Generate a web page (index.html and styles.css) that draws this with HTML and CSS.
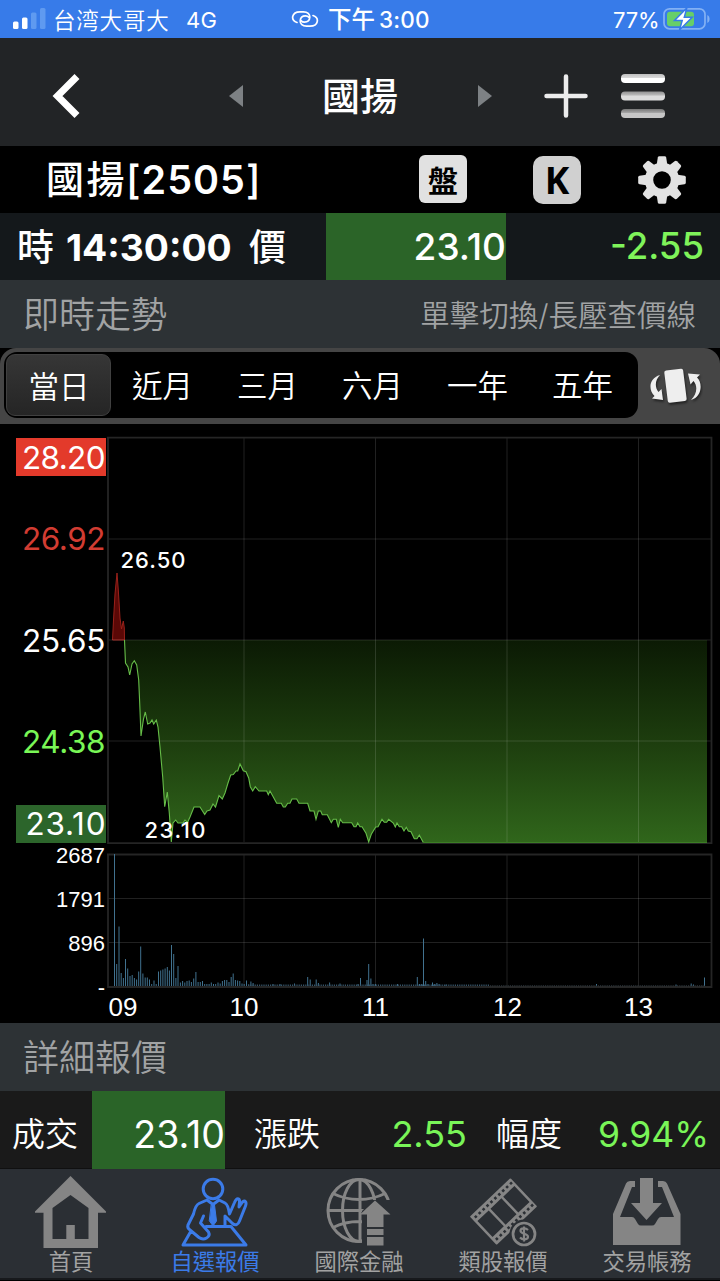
FILE: index.html
```html
<!DOCTYPE html>
<html lang="zh-Hant">
<head>
<meta charset="utf-8">
<title>國揚[2505]</title>
<link rel="stylesheet" href="styles.css">
</head>
<body>
<div class="screen">
  <header class="status">
    <svg class="signal" width="34" height="22" viewBox="0 0 34 22"><rect x="1" y="13.500" width="5.500" height="7.500" rx="1.500" fill="#fff"/><rect x="10" y="9.500" width="5.500" height="11.500" rx="1.500" fill="#fff"/><rect x="19" y="4.500" width="5.500" height="16.500" rx="1.500" fill="#5f9af0"/><rect x="28" y="0" width="5.500" height="21" rx="1.500" fill="#5f9af0"/></svg>
    <span class="carrier">台湾大哥大</span>
    <span class="network">4G</span>
    <svg class="link" width="28" height="18" viewBox="0 0 28 18" fill="none" stroke="#fff" stroke-width="1.700" stroke-linecap="round"><path d="M6 12.500C3 11.500 1.200 9 1.800 6.300 2.500 3.200 5.500 1.800 9 1.800h3.500c4 0 6.500 2.200 6.300 5.500-.2 3-2.300 4.900-5.300 4.900-1.500 0-2.700-.5-3.300-1.500"/><path d="M22 5.500c3 1 4.800 3.500 4.200 6.200-.7 3.100-3.700 4.500-7.200 4.500h-3.500c-4 0-6.500-2.200-6.300-5.500.2-3 2.300-4.900 5.300-4.900 1.500 0 2.700.5 3.300 1.500"/></svg>
    <span class="ampm">下午</span><span class="clock">3:00</span>
    <span class="percent">77%</span>
    <svg class="battery" width="48" height="24" viewBox="0 0 48 24"><rect x="1" y="1.800" width="41" height="20" rx="5.500" fill="none" stroke="#83b1f4" stroke-width="1.700"/><rect x="4" y="4.700" width="27" height="14.500" rx="3" fill="#67cf68"/><path d="M44.300 8v8c3-1.300 3-6.700 0-8z" fill="#83b1f4"/><path d="M23.800 1 11.500 13.500h7.700l-2.700 9.500L29.200 10.200h-7.900z" fill="#fff" stroke="#377be9" stroke-width="1.500"/></svg>
  </header>

  <nav class="topnav">
    <svg class="back" width="30" height="46" viewBox="0 0 30 46"><path d="M25 3.500 5.500 23 25 42.500" fill="none" stroke="#fff" stroke-width="7"/></svg>
    <svg class="prev" width="14" height="22" viewBox="0 0 14 22"><path d="M14 0v22L0 11z" fill="#7d8184"/></svg>
    <h1 class="nav-title">國揚</h1>
    <svg class="next" width="14" height="22" viewBox="0 0 14 22"><path d="M0 0v22l14-11z" fill="#7d8184"/></svg>
    <svg class="add" width="44" height="44" viewBox="0 0 44 44"><path d="M22 2.500v39M2.500 22h39" stroke="#ececec" stroke-width="4.500" stroke-linecap="round"/></svg>
    <svg class="menu" width="46" height="46" viewBox="0 0 46 46"><defs><linearGradient id="barA" x2="0" y2="1"><stop stop-color="#bfbfbf"/><stop offset=".45" stop-color="#dcdcdc"/><stop offset=".5" stop-color="#fff"/></linearGradient><linearGradient id="barB" x2="0" y2="1"><stop stop-color="#929292"/><stop offset=".4" stop-color="#bababa"/><stop offset=".5" stop-color="#dcdcdc"/></linearGradient><linearGradient id="barC" x2="0" y2="1"><stop stop-color="#777"/><stop offset=".45" stop-color="#aaa"/><stop offset=".5" stop-color="#c6c6c6"/></linearGradient></defs><rect x="1" y="1" width="44" height="9" rx="4" fill="url(#barA)"/><rect x="1" y="18.500" width="44" height="9" rx="4" fill="url(#barB)"/><rect x="1" y="36" width="44" height="9" rx="4" fill="url(#barC)"/></svg>
  </nav>

  <section class="symbol">
    <h2 class="symbol-name"><span class="symbol-cjk">國揚</span><span class="symbol-code"><span class="bracket">[</span>2505<span class="bracket">]</span></span></h2>
    <span class="chip chip-book">盤</span>
    <span class="chip chip-k">K</span>
    <svg class="gear" width="48" height="48" viewBox="-24 -24 48 48" fill="#e2e2e2"><defs><path id="tooth" d="M-5.500-14-4.200-22.500Q-3.900-23.800-2.700-23.800h5.400Q3.900-23.800 4.200-22.500L5.500-14z"/></defs><circle r="13" fill="none" stroke="#e2e2e2" stroke-width="8.400"/><use href="#tooth"/><use href="#tooth" transform="rotate(45)"/><use href="#tooth" transform="rotate(90)"/><use href="#tooth" transform="rotate(135)"/><use href="#tooth" transform="rotate(180)"/><use href="#tooth" transform="rotate(225)"/><use href="#tooth" transform="rotate(270)"/><use href="#tooth" transform="rotate(315)"/></svg>
  </section>

  <section class="quote">
    <div class="quote-time"><span class="quote-cjk">時</span><span class="quote-clock">14:30:00</span><span class="quote-cjk">價</span></div>
    <div class="quote-price">23.10</div>
    <div class="quote-change">-2.55</div>
  </section>

  <section class="section-head"><span class="section-title">即時走勢</span><span class="section-hint">單擊切換/長壓查價線</span></section>

  <div class="ranges">
    <div class="range-list"><span class="range active">當日</span><span class="range">近月</span><span class="range">三月</span><span class="range">六月</span><span class="range">一年</span><span class="range">五年</span></div>
    <svg class="rotate" width="54" height="44" viewBox="0 0 54 44"><g class="rotate-shape" fill="#eee"><rect x="17" y="5.500" width="19" height="32.500" rx="2" transform="rotate(-7 26.500 22)"/><path d="M11 11C0 14-1 26 5.500 32L3 34.500 14 36 12.500 25 9.500 28C5.500 23 6 16 11 11z"/><path d="M42 36C53 33 54 19 48 13.500L51 10.500 39 9.500 41.500 20.500 44.500 17C49 22 48 30 42 36z"/></g></svg>
  </div>

  <svg class="chart" width="720" height="599" viewBox="0 424 720 599">
    <defs>
      <linearGradient id="loss" gradientUnits="userSpaceOnUse" x1="0" y1="640" x2="0" y2="843"><stop stop-color="#0b1a04"/><stop offset=".5" stop-color="#1d3d0e"/><stop offset="1" stop-color="#30661b"/></linearGradient>
    </defs>
    <path d="M112.500 640 113.500 620 115 594 117 573 118.300 590 120 618 121.500 629 123.300 621 124.300 628 124.500 640z" fill="#5b0806" stroke="#99211a"/>
    <path d="M124.500 640 125.500 663 128 667 129.700 675 132 664 134.300 660.700 136.700 665 138.700 680 139.700 703 141 736 143.500 719 145.300 712 147.700 724 150 723 152 720 153.700 724 156.300 720 158 727 160 747 162.700 777 164.700 806.700 167.300 792 169.300 813 171.300 842 173 823 175.700 820 178 823 183 823 185 820 187.500 822.500 190 817 194 807 200 807 204.700 814.500 207 811 210 810 213 804 215.500 807 219 795.500 222.300 799 225 793 228 783 230.700 775 233.300 774.500 236 771 237.700 771 240 764 243.300 770.700 246 771.700 248.700 778 250.300 786.700 252.700 791 255.300 786.700 259 791 266.700 791 268.300 794.700 270 791 273.300 797 276.700 803.300 281.300 803.300 283.300 807 285.300 807 287.700 803.300 290 803.300 292 799 296.700 799 299 803.300 307.700 803.300 310 811 314 811 316 819.300 318.300 811 320.700 811 322.300 814.700 327.300 814.700 331.300 822.700 333.300 819.300 336.300 819.300 338.300 827.300 340.300 819.300 342.700 822.700 351.700 822.700 354 826.700 356 826.700 357.700 823 360 826.700 362 826.700 366 833.300 368.700 842 371.300 834.300 375.700 827 378 826.700 382 819.300 384.300 822.300 386.700 822.300 388.700 819.300 393.300 823 395.300 827 397 823 399.300 826.700 401.700 826.700 404 831 406.300 827.300 408.300 831 411 831.700 414.300 838.700 417 838.700 419.300 835 423.300 842.500H707V640z" fill="url(#loss)"/>
    <g class="grid">
      <path d="M244 438V842M375.500 438V842M507 438V842M638.500 438V842M244 855V986M375.500 855V986M507 855V986M638.500 855V986M108 539H711M108 640H711M108 741H711M108 898.500H711M108 942.500H711"/>
    </g>
    <path d="M107 437.700H711.500V843.200H108V437M107 854.500H711.500V987H108V854" fill="none" stroke="#252525" stroke-width="1.800"/>
    <path d="M124.500 640 125.500 663 128 667 129.700 675 132 664 134.300 660.700 136.700 665 138.700 680 139.700 703 141 736 143.500 719 145.300 712 147.700 724 150 723 152 720 153.700 724 156.300 720 158 727 160 747 162.700 777 164.700 806.700 167.300 792 169.300 813 171.300 842 173 823 175.700 820 178 823 183 823 185 820 187.500 822.500 190 817 194 807 200 807 204.700 814.500 207 811 210 810 213 804 215.500 807 219 795.500 222.300 799 225 793 228 783 230.700 775 233.300 774.500 236 771 237.700 771 240 764 243.300 770.700 246 771.700 248.700 778 250.300 786.700 252.700 791 255.300 786.700 259 791 266.700 791 268.300 794.700 270 791 273.300 797 276.700 803.300 281.300 803.300 283.300 807 285.300 807 287.700 803.300 290 803.300 292 799 296.700 799 299 803.300 307.700 803.300 310 811 314 811 316 819.300 318.300 811 320.700 811 322.300 814.700 327.300 814.700 331.300 822.700 333.300 819.300 336.300 819.300 338.300 827.300 340.300 819.300 342.700 822.700 351.700 822.700 354 826.700 356 826.700 357.700 823 360 826.700 362 826.700 366 833.300 368.700 842 371.300 834.300 375.700 827 378 826.700 382 819.300 384.300 822.300 386.700 822.300 388.700 819.300 393.300 823 395.300 827 397 823 399.300 826.700 401.700 826.700 404 831 406.300 827.300 408.300 831 411 831.700 414.300 838.700 417 838.700 419.300 835 423.300 842.500" fill="none" stroke="#66bd48" stroke-width="1.100"/>
    <path d="M423 842.500H707" stroke="#3c7d25"/>
    <path class="volume" d="M114.500 986V854M116.700 986v-22M119 986v-59.500M121.200 986v-13M123.400 986v-8M125.500 986v-27M127.700 986v-17.500M130 986v-10M132.200 986v-11M134.400 986v-8M136.600 986v-6.500M138.700 986v-14.500M140.700 986v-39.500M142.900 986v-12.500M145.200 986v-8.500M147.300 986v-8.500M149.500 986v-6.500M151.700 986v-2M154 986v-5.500M156.200 986v-2M158.500 986v-14.500M160.700 986v-15.500M162.900 986v-16.500M165.100 986v-17.500M167.300 986v-19M169.400 986v-15.500M171.500 986v-41M173.700 986v-32M175.900 986v-8M178 986v-20M180.400 986v-3.500M182.600 986v-5M184.800 986v-3.500M187 986v-5M189.200 986v-5.500M191.400 986v-4M193.700 986v-7.500M195.900 986v-14M198.100 986v-4M200.300 986v-4M202.500 986v-5M204.700 986v-2M206.900 986v-2M209.100 986v-2M211.300 986v-3.500M213.500 986v-2M215.700 986v-2M218 986v-3.500M220.200 986v-2.500M222.400 986v-5M224.600 986v-6M226.800 986v-6M229 986v-4M231.200 986v-9M233.200 986v-12.500M235.400 986v-6M237.600 986v-5.500M239.800 986v-5M242 986v-2.500M244.200 986v-2M246.500 986v-5.500M248.700 986v-1.500M250.900 986v-4.500M253.100 986v-3M273 986v-2M280 986v-2M294.500 986v-2.500M307.700 986v-9M310.200 986v-6.500M316.200 986v-6.500M318.400 986v-3M329.600 986v-3.500M340 986v-2.500M358 986v-2M360.500 986v-8M367 986v-6M368.700 986v-22M370.900 986v-7.500M373 986v-2M375.500 986v-2M397.500 986v-2M417.300 986v-9M419.500 986v-2M421.700 986v-2M423.500 986v-47.500M425.700 986v-5M428 986v-2M432.500 986v-3.500M434.700 986v-2M436.900 986v-3M439.100 986v-2M446 986v-1.500M596.500 986v-2M676 986v-1.500M691.200 986v-2.500M693.500 986v-1.500M704.500 986v-8.500"/>
    <path d="M248 985.200H490" stroke="#365468" stroke-width="1.600" stroke-dasharray="1.200 1"/><path d="M490 985.800H705" stroke="#303a40" stroke-width="1" stroke-dasharray="1.200 1"/>
    <rect x="16" y="438" width="90" height="38" fill="#e33a2b"/><rect x="16" y="805" width="90" height="38" fill="#2c652b"/>
    <g class="price-axis">
      <text x="22" y="468.500" textLength="83.500">28.20</text><text class="up" x="22" y="550" textLength="83.500">26.92</text><text x="22" y="651.500" textLength="83.500">25.65</text><text class="down" x="22" y="752.500" textLength="83.500">24.38</text><text x="25.500" y="835" textLength="80">23.10</text>
    </g>
    <g class="marks"><text x="120.500" y="567.500" textLength="65">26.50</text><text x="144.500" y="837.500" textLength="61">23.10</text></g>
    <g class="volume-axis"><text x="105" y="863">2687</text><text x="105" y="907">1791</text><text x="105" y="951">896</text><text x="105" y="995">-</text></g>
    <g class="hours"><text x="123" y="1016">09</text><text x="244" y="1016">10</text><text x="375.500" y="1016">11</text><text x="507.500" y="1016">12</text><text x="638.500" y="1016">13</text></g>
  </svg>

  <section class="section-head"><span class="section-title">詳細報價</span></section>

  <section class="detail">
    <span class="detail-label">成交</span><span class="detail-price">23.10</span><span class="detail-label label-change">漲跌</span><span class="detail-value">2.55</span><span class="detail-label label-rate">幅度</span><span class="detail-value value-rate">9.94%</span>
  </section>

  <nav class="tabs">
    <a class="tab"><svg width="72" height="72" viewBox="0 0 72 72"><path fill="#858585" fill-rule="evenodd" d="M35.500 0 71 35.500v1.200h-8V72H8.500V36.700H0v-1.200zM17.500 32v31h13.800V49h8.500v14h13.700V32l-18-13z"/></svg><span class="tab-label">首頁</span></a>
    <a class="tab selected"><svg width="72" height="72" viewBox="0 0 72 72" fill="none" stroke="#3b7be8" stroke-width="3" stroke-linejoin="round" stroke-linecap="round"><circle cx="34" cy="13" r="9.800"/><path d="M28 24 20 27.500Q16.500 29 14.500 38L9 49Q8 52 11 54L20 61.500C25 65 32 61 29.500 56L21.500 47 24.500 40M28 24 34 28.500 40 24 46 27Q49 28.500 50.500 38L55.500 26.500C57.500 21.500 61 21.500 60.500 26L60 31 63.500 26C66 24 68 26 66.500 30L60.500 45C59 49 56.500 50 53.500 47.500L46 40V49M12 55 4 69H67L52 50.500H27"/><path d="M32.500 29h3l2 16-3.500 5-3.500-5z" fill="#3b7be8" stroke-width="1"/></svg><span class="tab-label">自選報價</span></a>
    <a class="tab"><svg width="72" height="72" viewBox="0 0 72 72"><clipPath id="globe-cut"><path d="M0 0H72V24H50L39 35V72H0z"/></clipPath><g fill="none" stroke="#858585" stroke-width="3" clip-path="url(#globe-cut)"><circle cx="36" cy="34.500" r="31"/><ellipse cx="36" cy="34.500" rx="16.500" ry="31"/><path d="M37 3v63M5 34.500h61M10 17.500c16 8 36 8 52 0M10 51.500c16-8 36-8 52 0"/></g><path d="M52 24.500 67.500 38.500H60.500V69.500H44V38.500H37z" fill="#858585"/><path d="M43 52h19M43 60h19" stroke="#2b2f34" stroke-width="2"/></svg><span class="tab-label">國際金融</span></a>
    <a class="tab"><svg width="72" height="72" viewBox="0 0 72 72"><g transform="translate(36.500 35.500) rotate(-43.500)"><rect x="-28" y="-19.500" width="56" height="39" rx="1" fill="#858585"/><path d="M-25.500-11h15.500v22h-15.500zM-7.500-11h15v22h-15zM10-11h15.500v22H10z" fill="#2b2f34"/><path d="M-25-15.300H27M-25 15.300H27" stroke="#2b2f34" stroke-width="2.600" stroke-dasharray="2.600 2.800"/></g><circle cx="57" cy="58" r="14.500" fill="#2b2f34"/><circle cx="57" cy="58" r="11" fill="none" stroke="#858585" stroke-width="2.700"/><path d="M61 54c-2.500-2.500-7.500-2-7.500.8 0 3.600 7.500 2.300 7.500 6 0 3.200-5.500 3.500-8 .8M57 50.500v15" fill="none" stroke="#858585" stroke-width="2.200"/></svg><span class="tab-label">類股報價</span></a>
    <a class="tab"><svg width="72" height="72" viewBox="0 0 72 72" fill="#858585"><path d="M2 38 15 7.500Q16 5 19 5h5v6h-3L9 41h12q2 0 3 2l3 5q1 1.500 3 1.500h11q2 0 3-1.500l3-5q1-2 3-2h13L51 11h-4V5h5q3 0 4 2.500L69.500 38V69H2z"/><path d="M29 2h13v25h9L35.500 44 20 27h9z"/></svg><span class="tab-label">交易帳務</span></a>
  </nav>
</div>
</body>
</html>
```

FILE: styles.css
```css
* { box-sizing: border-box; }
body { margin: 0; background: #000; color: #fff; font-family: Inter, "Noto Sans CJK TC", sans-serif; }
svg { display: block; flex: none; }
.screen { width: 720px; height: 1281px; display: flex; flex-direction: column; overflow: hidden; background: #000; }
.screen > * { flex: none; }
h1, h2 { margin: 0; font-weight: 500; }
span, h1, h2 { white-space: nowrap; }

.status { height: 38px; display: flex; align-items: center; background: #377be9; font-size: 22px; line-height: 36px; padding-top: 2px; }
.status span { flex: none; }
.signal { margin: 0 0 3px 12px; }
.carrier { width: 133px; margin-left: 7px; padding-bottom: 2px; font-size: 22.500px; letter-spacing: .8px; font-family: "Noto Sans CJK SC", sans-serif; font-weight: 350; }
.network { width: 105px; letter-spacing: .3px; font-weight: 400; }
.link { margin-bottom: 2px; }
.ampm { width: 51px; margin-left: 9px; padding-bottom: 1px; font-size: 23.500px; font-weight: 500; }
.clock { width: 234px; font-size: 22.500px; font-weight: 500; letter-spacing: .2px; }
.percent { width: 50px; font-size: 22px; letter-spacing: -.2px; font-weight: 400; }
.battery { margin-bottom: 2px; }

.topnav { height: 108px; display: flex; align-items: center; padding: 8px 0 0 52px; background: #222426; }
.prev { margin-left: 147px; margin-right: 79px; }
.nav-title { width: 156px; font-size: 38px; line-height: 50px; }
.add { margin-left: 52px; }
.menu { margin-left: 32px; }

.symbol { height: 67px; display: flex; align-items: center; padding: 0 0 0 46px; }
.symbol-name { display: flex; align-items: center; width: 373px; line-height: 66px; }
.symbol-cjk { width: 80px; padding-bottom: 2px; font-size: 38px; letter-spacing: 2.500px; }
.symbol-code { font-size: 39.500px; font-weight: 600; letter-spacing: 1px; }
.bracket { font-weight: 500; }
.chip { width: 48px; height: 48px; display: flex; align-items: center; justify-content: center; color: #000; background: #e1e1e1; }
.chip-book { margin-bottom: 1px; padding-bottom: 1px; border-radius: 6px; font-size: 30px; font-weight: 700; }
.chip-k { margin: 1px 0 0 66px; border-radius: 10px; background: #d0d0d0; font: 700 37px "Open Sans", sans-serif; padding-bottom: 1px; }
.gear { margin: 1px 0 0 57px; }

.quote { height: 67px; display: grid; grid-template-columns: 326px 180px 214px; background: #14181b; line-height: 67px; }
.quote-time { display: flex; align-items: center; padding: 1px 0 0 17px; }
.quote-cjk { font-size: 37px; font-weight: 500; }
.quote-clock { width: 195px; flex: none; padding-left: 12px; font-size: 37.300px; font-weight: 700; }
.quote-price { text-align: right; background: #2b6428; font-size: 37px; font-weight: 500; }
.quote-change { padding-right: 16px; text-align: right; color: #7ff35a; font-size: 36.500px; font-weight: 500; }

.section-head { height: 68px; display: flex; align-items: center; justify-content: space-between; padding: 0 24px 4px 23px; background: #2d3235; color: #a1a3a4; font-weight: 350; }
.section-title { font-size: 36px; }
.section-hint { padding-top: 1px; font-size: 29.500px; }

.ranges { height: 76px; display: flex; align-items: center; padding-left: 4px; border-radius: 16px 16px 0 0; background: #454545; }
.range-list { width: 634px; height: 66px; margin-bottom: 2px; display: grid; grid-template-columns: repeat(6, 105px); padding: 2px; border-radius: 13px; background: #000; }
.range { display: flex; align-items: center; justify-content: center; padding: 0 2px 3px 0; font-size: 30.500px; font-weight: 350; }
.range.active { padding: 0 0 0 1px; border: 1px solid #404040; border-radius: 9px; background: linear-gradient(#363636, #252525); }
.rotate { margin-left: 11px; }
.rotate-shape { filter: drop-shadow(1px 2px 1px #222); }

.chart text { fill: #fff; }
.price-axis { font-size: 31.500px; }
.chart .up { fill: #d23c32; }
.chart .down { fill: #79f756; }
.marks { font-size: 22px; font-weight: 500; }
.volume-axis { font: 22px "Liberation Sans", sans-serif; text-anchor: end; }
.hours { font: 26px "Liberation Sans", sans-serif; text-anchor: middle; }
.grid { fill: none; stroke: #fff; stroke-opacity: .13; stroke-width: 1; }
.volume { fill: none; stroke: #41728f; stroke-width: 1; }

.detail { height: 78px; display: grid; grid-template-columns: 92px 133px 114px 128px 114px 139px; align-items: stretch; background: #1a1a1a; line-height: 87px; border-bottom: 1px solid #101010; }
.detail-label { padding-left: 12px; font-size: 33px; font-weight: 350; }
.label-change, .label-rate { padding-left: 29px; }
.detail-price, .detail-value { text-align: right; font-size: 36px; font-weight: 400; }
.detail-price { font-size: 37.500px; background: #2a6428; }
.detail-value { color: #79f558; }
.value-rate { padding-right: 11px; font-size: 35.500px; }

.tabs { height: 111px; display: grid; grid-template-columns: repeat(5, 144px); background: #2b2f34; border-bottom: 2px solid #17191c; }
.tab { display: flex; flex-direction: column; align-items: center; color: #a2a2a2; padding: 7px 2px 0 0; }
.tab-label { font-size: 22.300px; line-height: 28px; }
.selected .tab-label { color: #3b7be8; }
```
